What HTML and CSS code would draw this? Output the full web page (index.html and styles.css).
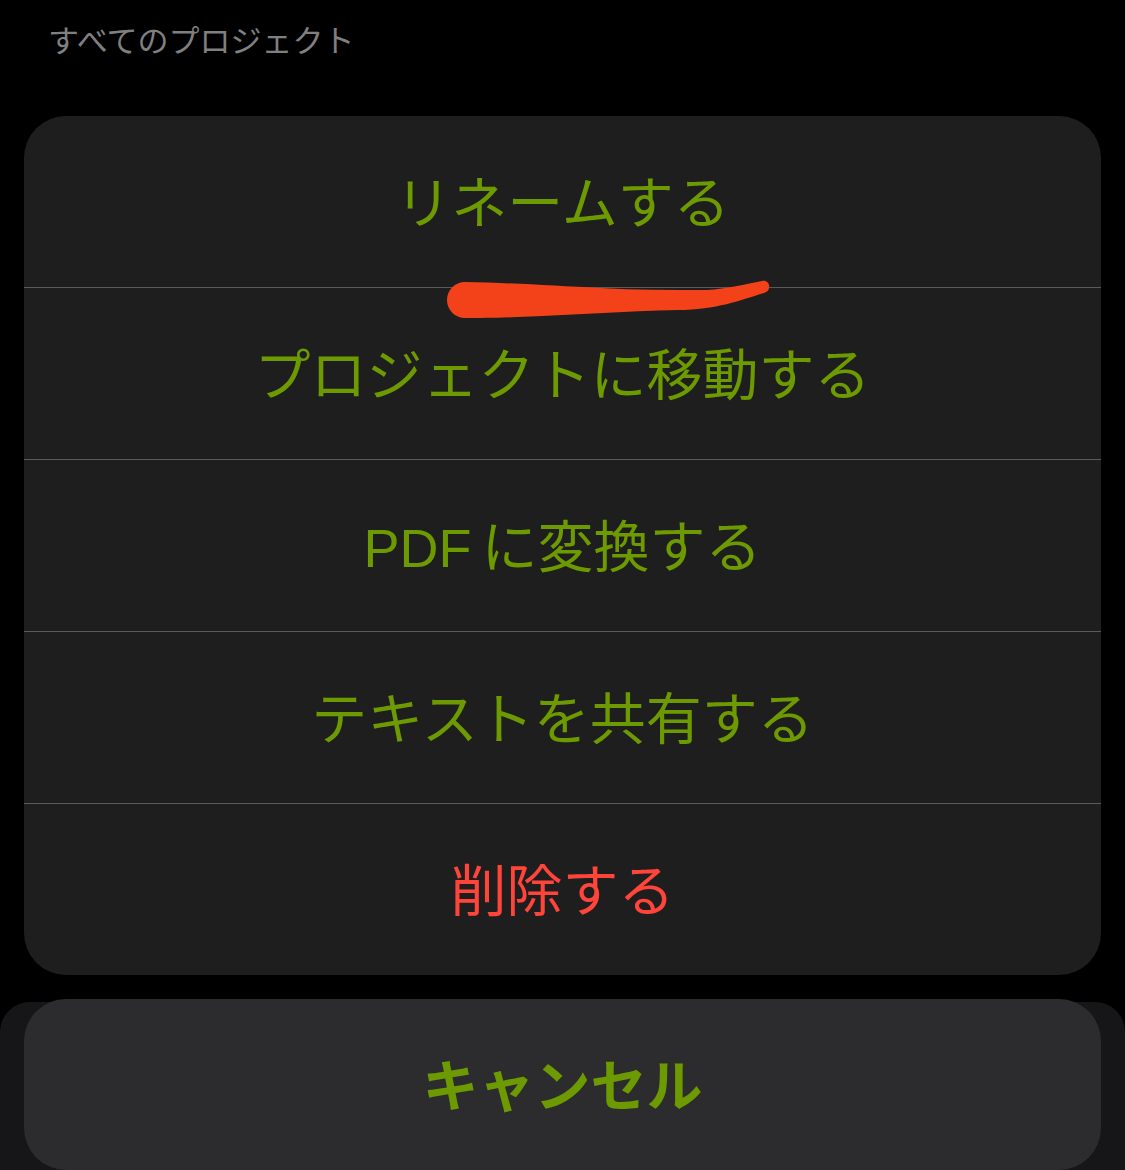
FILE: index.html
```html
<!DOCTYPE html>
<html lang="ja">
<head>
<meta charset="utf-8">
<title>アクション</title>
<link rel="stylesheet" href="styles.css">
</head>
<body>
<div class="screen">
  <div class="title">すべてのプロジェクト</div>
  <div class="sheet">
    <div class="row"><span class="label">リネームする</span></div>
    <div class="row"><span class="label">プロジェクトに移動する</span></div>
    <div class="row"><span class="label"><span class="latin">PDF</span>に変換する</span></div>
    <div class="row"><span class="label">テキストを共有する</span></div>
    <div class="row danger"><span class="label">削除する</span></div>
  </div>
  <div class="cancel-wrap">
    <div class="cancel"><span class="label">キャンセル</span></div>
  </div>
  <svg class="scribble" viewBox="0 0 325 40" width="325" height="40" aria-hidden="true">
    <path d="M1 20C1 10 9 2 19 2C70 3 110 6 154 8C190 10 225 10 261 10C280 9 300 4 316 1C321 0 324 4 323 8C323 10 321 12 318 13C295 20 270 30 232 30C180 31 125 35 71 37C50 38 35 38 19 38C9 38 1 30 1 20Z" fill="#f34119"/>
  </svg>
</div>
</body>
</html>
```
FILE: styles.css
```css
html, body {
  margin: 0;
  padding: 0;
  background: #000;
}
.screen {
  position: relative;
  width: 1125px;
  height: 1170px;
  overflow: hidden;
  background: #000;
  font-family: "Noto Sans CJK JP", "Liberation Sans", sans-serif;
}
.title {
  height: 116px;
  box-sizing: border-box;
  padding: 20px 0 0 48px;
  font-size: 31px;
  line-height: 38px;
  color: #808080;
}
.sheet {
  margin: 0 24px;
  width: 1077px;
  height: 859px;
  background: #1e1e1e;
  border-radius: 42px;
  display: flex;
  flex-direction: column;
}
.row {
  height: 171px;
  flex: none;
  display: flex;
  align-items: center;
  justify-content: center;
  font-size: 56px;
  color: #6c9a00;
  border-bottom: 1px solid #5a5a5a;
}
.row:last-child { border-bottom: 0; }
.label { margin-top: -7px; }
.latin {
  font-family: "Liberation Sans", sans-serif;
  font-size: 54px;
  margin-right: 10px;
}
.danger { color: #ff453a; }
.cancel-wrap {
  margin-top: 27px;
  height: 168px;
  background: #161618;
  border-radius: 30px 30px 0 0;
  padding: 0 24px;
  position: relative;
}
.cancel {
  position: relative;
  top: -3px;
  height: 171px;
  border-radius: 42px;
  background: #2c2c2e;
  display: flex;
  align-items: center;
  justify-content: center;
  font-size: 56px;
  font-weight: 700;
  color: #6c9a00;
}
.scribble {
  position: absolute;
  left: 446px;
  top: 280px;
}
```
